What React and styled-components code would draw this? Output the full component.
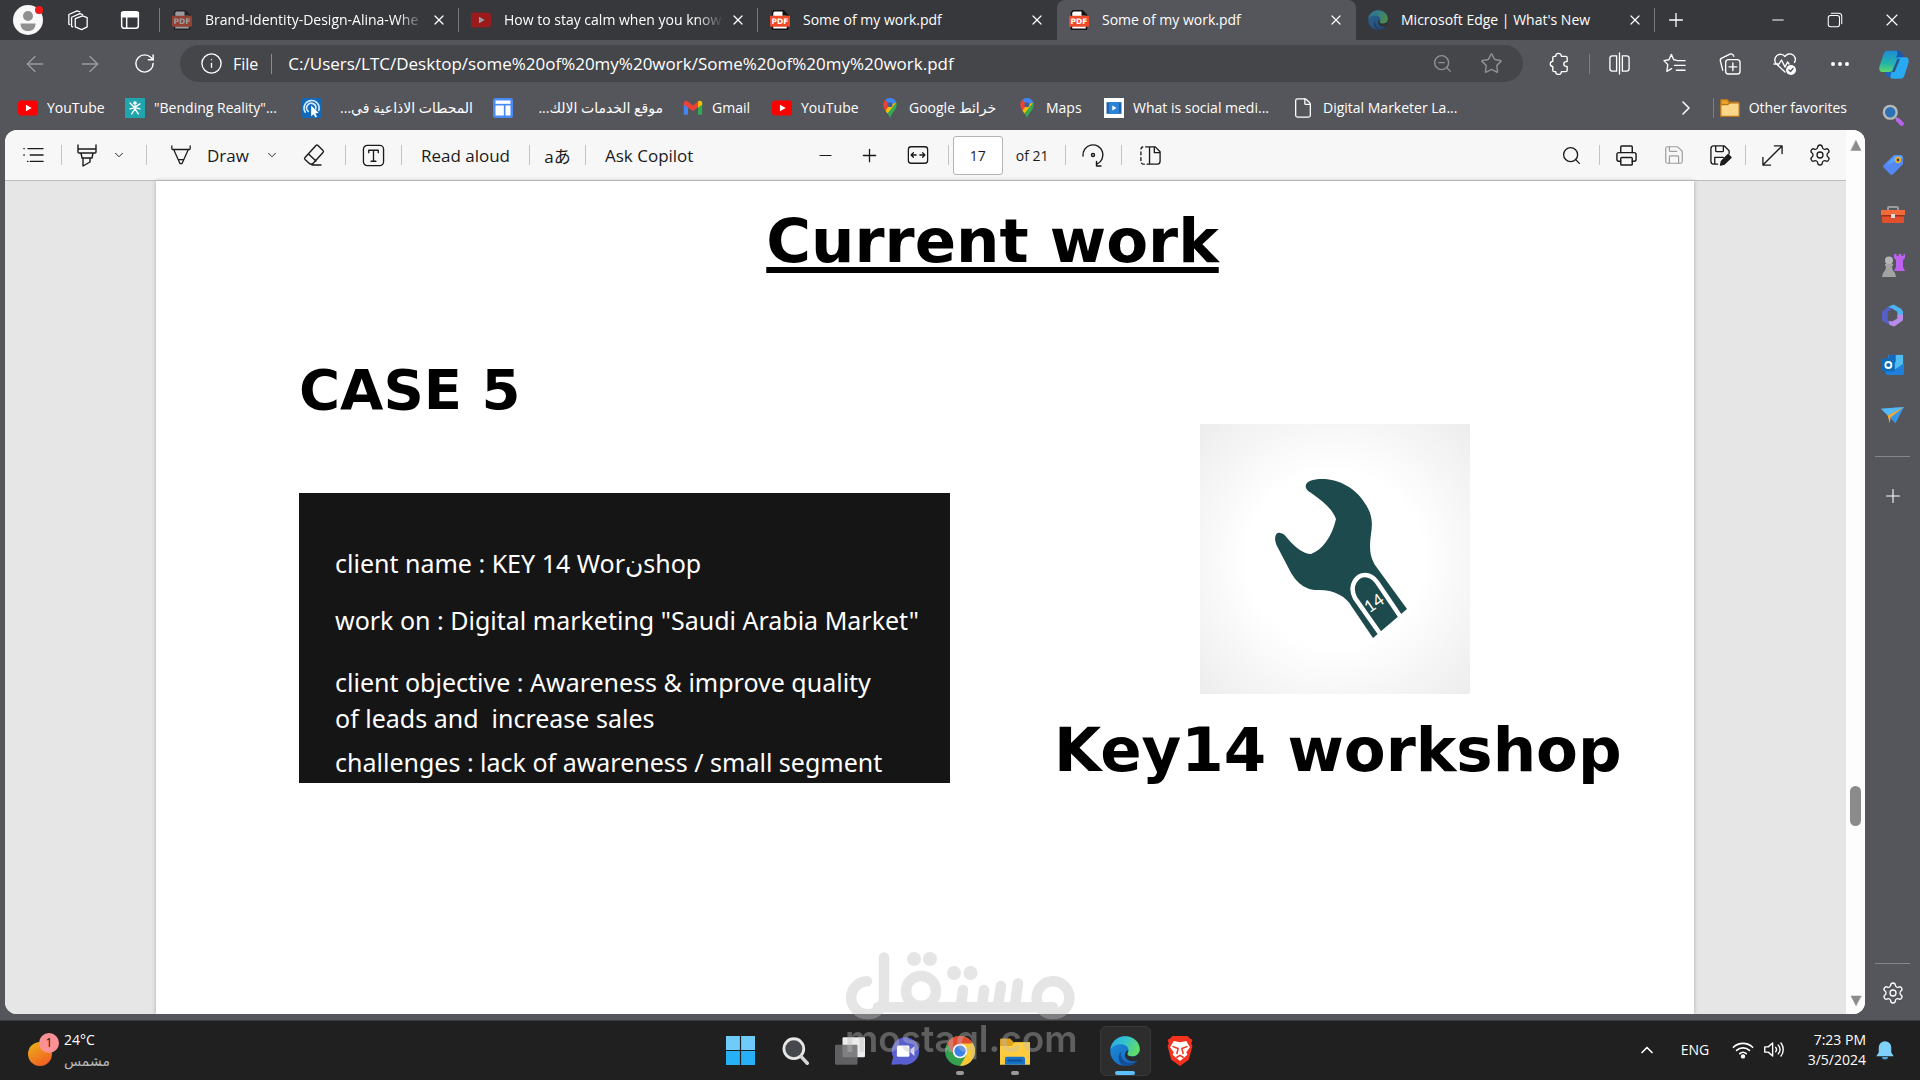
import React from "react";
import styled, { createGlobalStyle, css } from "styled-components";
import {
  ArrowLeft, ArrowRight, ChevronDown, ChevronRight, ChevronUp, Ellipsis, File, Info,
  Minus, Plus, Printer, RotateCw, Save, Search, Settings, Star, X, ZoomOut,
} from "lucide-react";

const ui = `"Open Sans", "Noto Sans", "DejaVu Sans", "Noto Sans CJK JP", sans-serif`;

const GlobalStyle = createGlobalStyle`
  * { box-sizing: border-box; }
  html, body, #root { margin: 0; height: 100%; }
  body { background: #55565b; font-family: ${ui}; font-size: 14px; color: #fff; overflow: hidden; }
  button, input { font: inherit; color: inherit; }
  a { color: inherit; text-decoration: none; }
  h1, h2, p, figure { margin: 0; }
  svg { display: block; flex: none; }
`;

const Screen = styled.div`
  display: flex;
  flex-direction: column;
  min-height: 100vh;
`;

const Btn = styled.button`
  display: flex;
  align-items: center;
  justify-content: center;
  flex: none;
  gap: ${(p) => p.$gap || 15}px;
  width: ${(p) => (p.$w ? `${p.$w}px` : "auto")};
  height: ${(p) => p.$h || 36}px;
  padding: ${(p) => p.$pad || "0"};
  border: 0;
  background: none;
  white-space: nowrap;
  opacity: ${(p) => (p.$dim ? 0.4 : 1)};
`;

/* ---------- tab strip ---------- */
const TabStrip = styled.header`
  display: flex;
  height: 40px;
  flex: none;
  background: #37383c;
`;
const tabLine = css`
  &::before { content: ""; position: absolute; left: -1px; top: 8px; height: 24px; width: 1px; background: #77787c; }
`;
const Tab = styled.div`
  display: flex;
  align-items: center;
  flex: 0 1 299px;
  min-width: 0;
  padding: 0 10px 0 12px;
  gap: 13px;
  position: relative;
  ${(p) => p.$active && css`background: #55565b; border-radius: 8px 8px 0 0;`}
  ${(p) => p.$line && tabLine}
`;
const NewTab = styled.button`
  display: flex;
  align-items: center;
  justify-content: center;
  flex: none;
  position: relative;
  width: 42px;
  padding: 0;
  border: 0;
  background: none;
  ${tabLine}
`;
const TabIcon = styled.span`
  opacity: ${(p) => (p.$faded ? 0.5 : 1)};
`;
const TabTitle = styled.span`
  flex: 1;
  overflow: hidden;
  white-space: nowrap;
  line-height: 20px;
  margin-right: -8px;
  ${(p) => p.$fade && css`mask-image: linear-gradient(90deg, #000 88%, transparent);`}
`;
const Grow = styled.div`
  flex: ${(p) => p.$n || 1};
`;

/* ---------- address row ---------- */
const NavRow = styled.nav`
  display: flex;
  align-items: center;
  flex: none;
  height: 47px;
  padding-left: 7px;
`;
const Address = styled.div`
  display: flex;
  align-items: center;
  flex: 1;
  height: 37px;
  margin: 0 9px 0 8px;
  padding: 0 8px 0 20px;
  border-radius: 19px;
  background: #45464a;
  font-size: 16px;
`;
const FileTag = styled.span`
  padding: 0 13px 0 10px;
  margin-right: 16px;
  border-right: 1px solid #8a8b8e;
  line-height: 20px;
`;
const UrlInput = styled.input`
  flex: 1;
  min-width: 0;
  padding: 0;
  border: 0;
  outline: 0;
  background: none;
  font-size: 17px;
`;
const Rule = styled.span`
  flex: none;
  width: 1px;
  height: 20px;
  margin: 0 ${(p) => p.$m || 0}px;
  background: ${(p) => (p.$light ? "#c4c4c4" : "#7e7f83")};
`;

/* ---------- bookmarks + body ---------- */
const Body = styled.div`
  display: flex;
  flex: 1;
  min-height: 0;
`;
const Main = styled.div`
  display: flex;
  flex-direction: column;
  flex: 1;
  min-width: 0;
  padding: 0 0 6px 5px;
`;
const Bookmarks = styled.nav`
  display: flex;
  align-items: center;
  flex: none;
  height: 43px;
  padding: 0 18px 1px 13px;
`;
const Bookmark = styled.a`
  display: flex;
  align-items: center;
  gap: 9px;
  margin-right: 20px;
  white-space: nowrap;
  line-height: 20px;
  &:last-child { margin-right: 0; }
`;
const BookmarkLabel = styled.span`
  width: ${(p) => (p.$w ? `${p.$w}px` : "auto")};
`;

const Side = styled.aside`
  display: flex;
  flex-direction: column;
  align-items: center;
  width: 55px;
  flex: none;
  padding-top: 3px;
`;
const SideRule = styled.span`
  width: 35px;
  height: 1px;
  margin: ${(p) => p.$m};
  background: #85868a;
`;

/* ---------- viewer ---------- */
const Viewer = styled.main`
  display: flex;
  flex: 1;
  min-height: 0;
  border-radius: 12px;
  overflow: hidden;
  background: #fff;
  color: #1b1b1b;
`;
const Doc = styled.div`
  display: flex;
  flex-direction: column;
  flex: 1;
  min-width: 0;
`;
const PdfBar = styled.div`
  display: flex;
  align-items: center;
  flex: none;
  height: 51px;
  padding-right: 5px;
  background: #f7f7f7;
  border-bottom: 1px solid #bdbdbd;
  font-size: 17px;
`;
const PageBox = styled.input`
  width: 50px;
  height: 39px;
  padding: 0;
  border: 1px solid #b4b4b4;
  border-radius: 3px;
  background: #fff;
  text-align: center;
  font-size: 14px;
`;
const PageCount = styled.label`
  width: 62px;
  padding-left: 13px;
  font-size: 14px;
`;
const Canvas = styled.div`
  display: flex;
  flex: 1;
  min-height: 0;
  padding: 0 152px 0 151px;
  background: #e6e6e6;
`;
const Sheet = styled.article`
  flex: 1;
  min-width: 0;
  padding-left: 143px;
  background: #fff;
  color: #000;
  box-shadow: 0 0 4px #aaa;
`;
const heading = css`
  font-family: "DejaVu Sans", Verdana, sans-serif;
  font-weight: 700;
  line-height: 72px;
  white-space: nowrap;
`;
const Title = styled.h1`
  ${heading}
  margin-top: 24px;
  padding-right: 8px;
  font-size: 61px;
  text-align: center;
  text-decoration: underline;
  text-decoration-thickness: 6px;
  text-underline-offset: 5px;
  text-decoration-skip-ink: none;
`;
const Columns = styled.div`
  display: grid;
  grid-template-columns: 651px 1fr;
  column-gap: 104px;
  margin-top: 77px;
`;
const CaseTitle = styled.h2`
  ${heading}
  font-size: 56px;
`;
const Brief = styled.section`
  height: 290px;
  margin-top: 67px;
  padding: 52px 0 0 36px;
  background: #151515;
  color: #fff;
  font-family: "Noto Sans", "DejaVu Sans", sans-serif;
  font-size: 25px;
  line-height: 36px;
  white-space: pre;
`;
const Line = styled.p`
  margin-bottom: ${(p) => p.$mb || 0}px;
`;
const Figure = styled.figure`
  margin: 70px 0 20px 146px;
  width: 270px;
  height: 270px;
`;
const Brand = styled.h2`
  ${heading}
  font-size: 61px;
`;
const ScrollBar = styled.div`
  display: flex;
  flex-direction: column;
  align-items: center;
  width: 19px;
  padding: 10px 0 8px;
  background: #fdfdfd;
`;
const Thumb = styled.span`
  width: 11px;
  height: 40px;
  border-radius: 6px;
  background: #8b8b8b;
`;

/* ---------- taskbar ---------- */
const Taskbar = styled.footer`
  display: grid;
  grid-template-columns: 1fr auto 1fr;
  align-items: center;
  height: 60px;
  flex: none;
  background: #202020;
  border-top: 1px solid #3a3a3a;
`;
const Weather = styled.div`
  display: flex;
  align-items: center;
  gap: 4px;
  padding: 0 0 2px 26px;
  line-height: 21px;
`;
const Muted = styled.div`
  color: #b9b9b9;
`;
const Apps = styled.div`
  display: flex;
`;
const AppButton = styled.button`
  display: flex;
  align-items: center;
  justify-content: center;
  position: relative;
  width: 51px;
  height: 50px;
  margin: 0 2px;
  padding: 0;
  border: 1px solid ${(p) => (p.$active ? "#393939" : "transparent")};
  border-radius: 6px;
  background: ${(p) => (p.$active ? "#2d2d2d" : "none")};
  &::after {
    content: "";
    position: absolute;
    bottom: 0;
    width: ${(p) => (p.$active ? 20 : p.$open ? 8 : 0)}px;
    height: 4px;
    border-radius: 2px;
    background: ${(p) => (p.$active ? "#5cc0fa" : "#9a9a9a")};
  }
`;
const AppGap = styled.span`
  width: 55px;
`;
const Tray = styled.div`
  display: flex;
  align-items: center;
  justify-content: flex-end;
  padding: 0 25px 2px 0;
`;
const Clock = styled.time`
  width: 76px;
  margin-right: 9px;
  text-align: right;
  line-height: 20px;
`;

const Watermark = styled.div`
  position: fixed;
  left: 50%;
  bottom: 22px;
  width: 230px;
  margin-left: -115px;
  opacity: 0.4;
  color: #bebebe;
  pointer-events: none;
  text-align: center;
  font: 600 37px/38px Inter, sans-serif;
  white-space: nowrap;
`;

/* ---------- drawings ---------- */
const G = ({ s = 20, w = 1.4, children, box = 24, ...rest }) => (
  <svg width={s} height={s} viewBox={`0 0 ${box} ${box}`} fill="none" stroke="currentColor"
    strokeWidth={w} strokeLinecap="round" strokeLinejoin="round" aria-hidden="true" {...rest}>{children}</svg>
);
const Pdf = () => (
  <G s={20} w={0}>
    <path d="M5 1h11l5 5v17H3V3z" fill="#fff" stroke="#111" strokeWidth="1.800" />
    <path d="M15 0l7 7h-7z" fill="#111" />
    <rect x="0" y="7" width="24" height="13" rx="1" fill="#ee4b2b" />
    <text x="12" y="17" fill="#fff" fontSize="9" fontWeight="700" textAnchor="middle" fontFamily="DejaVu Sans">PDF</text>
  </G>
);
const Tube = () => (
  <G w={0}><rect x="0" y="3" width="24" height="18" rx="4" fill="#f00" /><path d="M9.500 8l7 4-7 4z" fill="#fff" /></G>
);
const EdgeLogo = ({ s = 20 }) => (
  <G s={s} w={0}>
    <defs>
      <linearGradient id="eg1" x1="0" y1="0" x2="1" y2=".4"><stop stopColor="#2aa5e8" /><stop offset=".5" stopColor="#33c2d0" /><stop offset="1" stopColor="#5fdc6a" /></linearGradient>
      <linearGradient id="eg2" x1="0" y1="0" x2="1" y2="1"><stop stopColor="#1b8fe0" /><stop offset="1" stopColor="#1660b4" /></linearGradient>
    </defs>
    <circle cx="12" cy="12" r="11.800" fill="url(#eg2)" />
    <path d="M.3 11C1 4.500 6 .2 12 .2c7 0 11.800 5 11.800 10.200 0 3.600-2.600 6-6 6-2.400 0-4-1-4-2 0-.7 1-1.200 1-3 0-2.700-2.600-4.800-6-4.800C4.500 6.600 1.200 8.800.3 11z" fill="url(#eg1)" />
    <path d="M9 12c-1.500 4.500 2 9.500 7.500 9.500 2.500 0 4.500-1 6-2.500-2 4-6.500 5.400-10.500 4.800C7.500 23 5 17 9 12z" fill="#154d96" />
    <path d="M13.800 14.400c0 1 1.600 2 4 2 3 0 5.100-1.500 5.800-4 .2 3-.2 5-1.600 7-3 1.600-9 1-10-3.400-.3-2 .8-4 2.400-4.600.6 1.600-.6 2.300-.6 3z" fill="#2c2c2f" />
  </G>
);
const MapPin = () => (
  <G w={0}>
    <path d="M12 0a8 8 0 0 1 7.500 5.500L12 8 6 2.500A8 8 0 0 1 12 0z" fill="#4285f4" />
    <path d="M6 2.500L12 8l-5.500 7C4.500 12 4 10 4 8c0-2.200.8-4.200 2-5.500z" fill="#ea4335" />
    <path d="M12 8l-5.500 7 2.500 3.500L18.500 11l1-5.500z" fill="#fbbc04" />
    <path d="M19.500 5.500c1.300 3.500 0 7-2 9.500-2.500 3-4 5-5.500 9-.8-2.300-1.800-4-3-5.500z" fill="#34a853" />
    <circle cx="12" cy="8" r="3" fill="#3c5f96" />
  </G>
);
const Gmail = () => (
  <G w={0}>
    <path d="M1 6v14h5V10z" fill="#4285f4" /><path d="M23 6v14h-5V10z" fill="#34a853" />
    <path d="M1 6c0-2.500 2.500-3.500 4.500-2L12 9l6-4.800V11l-6 4.500L1 8z" fill="#ea4335" />
    <path d="M18 4.200c2-1.700 5-.7 5 1.800v2l-5 3.500z" fill="#fbbc04" />
  </G>
);
const Spark = () => (
  <G w={1.6} stroke="#fff"><rect width="24" height="24" fill="#20a4ae" stroke="none" />
    <path d="M12 9v4M12 12L6 6M12 11l6-4M12 13l-4 6M12 13l4 6M6 13l6-1.500 6 1.500" /><circle cx="12" cy="6" r="1.400" fill="#fff" /></G>
);
const Radio = () => (
  <G w={2} stroke="#cfe9ff"><rect width="24" height="24" rx="3" fill="#1269b8" stroke="none" />
    <path d="M4 17a9 9 0 1 1 16-2M7.500 16a5.500 5.500 0 1 1 9-3" /><path d="M11 9l9 9-4 .4 2 4-2 1-2-4-3 2.600z" fill="#fff" stroke="none" /></G>
);
const Layout = () => (
  <G w={0}><rect width="24" height="24" rx="3" fill="#4a8af4" /><rect x="3" y="3" width="18" height="4" fill="#fff" />
    <rect x="3" y="9" width="10" height="12" fill="#fff" /><rect x="15" y="9" width="6" height="12" fill="#fff" /></G>
);
const Clip = () => (
  <G w={0}><rect width="24" height="24" fill="#fff" /><rect x="3" y="5" width="18" height="14" fill="#1c63b0" />
    <rect x="6" y="5" width="12" height="14" fill="#2f83d6" /><path d="M10 9l5 3-5 3z" fill="#fff" /></G>
);
const Folder = () => (
  <G w={1.4} stroke="#b8741a"><path d="M1 2h8l2 3h11v17H1z" fill="#e9a227" /><path d="M1 8h8l3-2h11v16H1z" fill="#fbd78a" /></G>
);
const Copilot = () => (
  <G s={32} w={0}>
    <defs><linearGradient id="cp" x1="0" y1="0" x2="0" y2="1"><stop stopColor="#1f8ad8" /><stop offset=".6" stopColor="#23b4a8" /><stop offset="1" stopColor="#5fd86a" /></linearGradient></defs>
    <path d="M11 2h4c2 0 3 1 3.500 3L20 8.500h-7z" fill="#1b57b0" />
    <path d="M7 2h6c1.500 0 2 1 1.600 2.400L11.500 15c-.6 2-1.500 3-3.500 3H3.500C1 18 .6 16 1.200 13.500L4 5c.6-2 1.500-3 3-3z" fill="url(#cp)" />
    <path d="M13 22H9c-2 0-3-1-3.500-3L5 18h6z" fill="#1c63bd" />
    <path d="M17 22h-6c-1.500 0-2-1-1.600-2.400L12.500 9c.6-2 1.500-3 3.500-3h4.500c2.500 0 2.900 2 2.300 4.500L20 19c-.6 2-1.500 3-3 3z" fill="#28a9f2" transform="translate(0 1)" />
    <path d="M14.500 8h2l-4 10h-2z" fill="#2f3a4c" opacity=".75" />
  </G>
);
const Wrench = () => (
  <svg width="270" height="270" viewBox="0 0 270 270" role="img" aria-label="Key14 wrench logo">
    <defs><radialGradient id="vg" r=".72"><stop offset=".45" stopColor="#fff" /><stop offset="1" stopColor="#ececec" /></radialGradient></defs>
    <rect width="270" height="270" fill="url(#vg)" />
    <path fill="#1d4a4c" d="M106 64C104 58 112 55 122 55C140 55 156 65 164 78C172 89 173 98 171 110C169 125 170 132 175 141L207 185L173 214L152 183C146 172 134 166 119 166C103 167 94 155 89 145L77 122C73 113 76 108 80 109C83 109 85 111 88 115C95 123 103 130 111 130C122 126 132 113 136 95C132 84 122 77 114 71C110 68 107 67 106 64Z" />
    <path fill="none" stroke="#fff" strokeWidth="4.500" d="M181 211L155 174C148 160 158 151 165 151C171 151 174 154 177 158L202 195" />
    <text x="174" y="185" fill="#fff" fontSize="17" textAnchor="middle" transform="rotate(-35 174 179)" fontFamily="Lato">14</text>
  </svg>
);

const Shop = () => (<G s={22} w={0}><path d="M2 12L13 1h8l2 2v8L12 22c-1 1-2 1-3 0l-7-7c-1-1-1-2 0-3z" fill="#5488f7" /><path d="M14 2h7l2 2-18 8z" fill="#5fb0f2" opacity=".7" /><circle cx="17.500" cy="6.500" r="2.500" fill="#40444c" stroke="#f0b429" strokeWidth="1.800" /></G>);
const Lens = () => (<G s={22} w={0}><circle cx="9" cy="9" r="7" fill="#2a72b5" stroke="#b8b8b8" strokeWidth="2.600" /><path d="M15 15l2 2" stroke="#999" strokeWidth="2" /><path d="M17.500 17.500l4 4" stroke="#b964ee" strokeWidth="4.500" /></G>);
const Toolbox = () => (<G s={24} w={0}><path d="M7 7V5q0-1 1-1h8q1 0 1 1v2" stroke="#9c9c9c" strokeWidth="2" fill="none" /><rect x="1" y="7" width="22" height="13" rx="1.500" fill="#e0502c" /><path d="M0 7h24v5H0z" fill="#f26a3a" /><path d="M1 12h22v1.500H1z" fill="#9b2f18" /><rect x="10" y="11" width="4" height="4" fill="#ddd" /></G>);
const Chess = () => (<G s={24} w={0}><path d="M13 1h2.500v2h2V1h3v2h2V1H24v4l-2 2v7l2 4H13l2-4V7l-2-2z" fill="#bb62ee" /><circle cx="8" cy="7.500" r="4" fill="#b5b5b5" /><path d="M4 11h8v2h-1c0 3 1 5 3 7l1 4H1l1-4c2-2 3-4 3-7H4z" fill="#a3a3a3" /></G>);
const M365 = () => (<G s={23} w={0}><path d="M7 3l6-2.500L21 5l2 3v6l-6-3V8l-5-3z" fill="#4ab4f0" /><path d="M23 11v6l-9 6.500-5-1.500-2-4 5 0 5-3v-4z" fill="#b98be8" /><path d="M7 3l5 2-5 3v7l2 7-7-4-1-3V8z" fill="#5560c8" /></G>);
const Outlook = () => (<G s={22} w={0}><rect x="7" y="1" width="16" height="16" fill="#50bdf0" /><path d="M7 1h8v8H7z" fill="#1468bd" /><path d="M4 14l10 3 10-7v11q0 2-2 2H6q-2 0-2-2z" fill="#1f80dc" /><rect y="5" width="14" height="14" rx="1" fill="#0f6cbd" /><circle cx="7" cy="12" r="3.300" fill="none" stroke="#fff" strokeWidth="2" /></G>);
const Plane = () => (<G s={23} w={0}><path d="M0 5l24-2-9 17-5-5z" fill="#3597ea" /><path d="M0 5l24-2L7 12z" fill="#55b8f7" /><path d="M7 12l17-9L10 14l-1 6z" fill="#f3a932" /></G>);

const Chrome = () => (<G s={30} w={0}><circle cx="12" cy="12" r="12" fill="#34a050" /><path d="M1.600 6A12 12 0 0 1 22.400 6L12 7 7 15z" fill="#e34b31" /><path d="M22.400 6A12 12 0 0 1 12 24l5.200-9L12 6z" fill="#fcc934" /><circle cx="12" cy="12" r="5.800" fill="#fff" /><circle cx="12" cy="12" r="4.500" fill="#3b82e8" /></G>);
const Explorer = () => (<G s={30} w={0}><path d="M0 3q0-1 1-1h7l3 3H24v5H0z" fill="#e0a11c" /><path d="M0 8h9l3-3h12v18H0z" fill="#fccb3f" /><path d="M4 23v-5q0-1.500 1.500-1.500h13q1.500 0 1.500 1.500v5z" fill="#1873c8" /><path d="M7 19.500h10" stroke="#0f569c" strokeWidth="2" /></G>);
const Brave = () => (<G s={30} w={0}><path d="M6 0h12l2 2 2 1-1 3 1 2-3 11-7 5-7-5L2 8l1-2-1-3 2-1z" fill="#f4321d" /><path d="M7 4l5 1 5-1 3 5-3 4 1 2-6 5-6-5 1-2-3-4z" fill="#fff" /><path d="M6.500 8.500l4 1.500-1 4M17.500 8.500l-4 1.500 1 4M9.500 17l2.500-1.500 2.500 1.500" stroke="#f4321d" strokeWidth="1.200" fill="none" /></G>);
const Chat = () => (<G s={30} w={0}><path d="M12 1a11 11 0 1 1-3 21.500L1 23l1.500-6A11 11 0 0 1 12 1z" fill="#5a5fd0" /><rect x="5.500" y="7.500" width="10" height="9" rx="1" fill="#fff" /><path d="M16.500 11l3-3v8l-3-3z" fill="#dfe0ff" /></G>);
const Start = () => (<G s={29} w={0}><path d="M0 0h11.500v11.500H0zM12.500 0H24v11.500H12.500z" fill="#6fcbfa" /><path d="M0 12.500h11.500V24H0zM12.500 12.500H24V24H12.500z" fill="#28b0f6" /></G>);
const Finder = () => (<G s={28} w={0}><circle cx="11" cy="10" r="8.500" fill="#45484c" stroke="#e8e8e8" strokeWidth="2.400" /><path d="M17.500 17l5 5.500" stroke="#d5d5d5" strokeWidth="3" /></G>);
const Desks = () => (<G s={30} w={0}><rect x="6" y="1" width="18" height="16" rx="1" fill="#ececec" /><rect x="0" y="7" width="18" height="16" rx="1" fill="#6c6c6e" opacity=".85" /></G>);
const Sun = () => (
  <svg width="34" height="36" viewBox="0 0 34 36" aria-hidden="true">
    <defs><linearGradient id="sn" x1="0" y1="0" x2=".6" y2="1"><stop stopColor="#eab417" /><stop offset="1" stopColor="#f26222" /></linearGradient></defs>
    <circle cx="14" cy="22" r="12" fill="url(#sn)" /><circle cx="23" cy="11" r="10" fill="#fb9095" />
    <text x="23" y="15" fontSize="12" textAnchor="middle" fill="#111">1</text>
  </svg>
);
const MostaqlMark = () => (
  <svg width="230" height="70" viewBox="0 0 230 70" fill="none" stroke="currentColor" strokeWidth="10.500" strokeLinecap="round" role="img" aria-label="مستقل">
    <path d="M22 31.300A16.400 16.400 0 1 0 39 48V7.500" />
    <line x1="33" y1="57.300" x2="208" y2="57.300" />
    <circle cx="76" cy="41" r="15" /><circle cx="208" cy="47.700" r="16.400" />
    <line x1="118" y1="40" x2="116" y2="55" /><line x1="139" y1="40" x2="137" y2="55" />
    <line x1="156" y1="36" x2="153" y2="55" /><line x1="173" y1="33.500" x2="170" y2="55" />
    <g fill="currentColor" stroke="none"><circle cx="69" cy="9" r="7" /><circle cx="85" cy="9" r="7" /><circle cx="109" cy="23" r="7" /><circle cx="125.500" cy="23" r="7" /></g>
  </svg>
);

const tabs = [
  { icon: <Pdf />, title: "Brand-Identity-Design-Alina-Whe", faded: true, fade: true, line: true },
  { icon: <Tube />, title: "How to stay calm when you know", faded: true, fade: true, line: true },
  { icon: <Pdf />, title: "Some of my work.pdf", line: true },
  { icon: <Pdf />, title: "Some of my work.pdf", active: true },
  { icon: <EdgeLogo />, title: "Microsoft Edge | What's New", faded: true },
];

const bookmarks = [
  { icon: <Tube />, label: "YouTube", w: 58 },
  { icon: <Spark />, label: '"Bending Reality"...', w: 128 },
  { icon: <Radio />, label: "المحطات الاذاعية في...", rtl: true, w: 142 },
  { icon: <Layout />, label: "موقع الخدمات الالك...", rtl: true, w: 141 },
  { icon: <Gmail />, label: "Gmail", w: 40 },
  { icon: <Tube />, label: "YouTube", w: 59 },
  { icon: <MapPin />, label: "Google خرائط", w: 88 },
  { icon: <MapPin />, label: "Maps", w: 38 },
  { icon: <Clip />, label: "What is social medi...", w: 139 },
  { icon: <File size={22} strokeWidth={1.4} />, label: "Digital Marketer La...", w: 139 },
];

export default function App() {
  return (
    <Screen>
      <GlobalStyle />
      <TabStrip>
        <Btn $w={56} $h={40} aria-label="Profile">
          <svg width="30" height="30" viewBox="0 0 30 30"><circle cx="15" cy="15" r="15" fill="#f8f8f8" /><circle cx="15" cy="11" r="5" fill="#8f8f8f" /><path d="M7.500 18.500h15c0 5-3 7.500-7.500 7.500s-7.500-2.500-7.500-7.500z" fill="#8f8f8f" /><circle cx="26" cy="5" r="4" fill="#f01818" /></svg>
        </Btn>
        <Btn $w={44} $h={40} aria-label="Workspaces"><G s={22}><path d="M9 10.500l8-3 5 2v10l-6 3-7-3z" /><path d="M6 19.500l-1-.5V9l9-4 3 1M3 17l-1-.5V6l9-4 3 1" /></G></Btn>
        <Btn $w={60} $h={40} aria-label="Tab actions"><G s={20} w={1.8}><rect x="2" y="2" width="20" height="20" rx="3" /><path d="M2 3h20v5H2z" fill="#fff" /><path d="M8 8v14" /></G></Btn>
        {tabs.map((t, i) => (
          <Tab key={i} $active={t.active} $line={t.line}>
            <TabIcon $faded={t.faded}>{t.icon}</TabIcon>
            <TabTitle $fade={t.fade}>{t.title}</TabTitle>
            <Btn $w={20} $h={20} aria-label="Close tab"><X size={16} strokeWidth={1.8} /></Btn>
          </Tab>
        ))}
        <NewTab aria-label="New tab"><Plus size={22} strokeWidth={1.4} /></NewTab>
        <Grow />
        <Btn $w={57} $h={40} aria-label="Minimize"><Minus size={18} strokeWidth={1.4} /></Btn>
        <Btn $w={57} $h={40} aria-label="Restore"><G s={18}><rect x="3" y="6" width="15" height="15" rx="3" /><path d="M7 3h10a4 4 0 0 1 4 4v10" /></G></Btn>
        <Btn $w={57} $h={40} aria-label="Close window"><X size={20} strokeWidth={1.4} /></Btn>
      </TabStrip>

      <NavRow>
        <Btn $w={55} $dim aria-label="Back"><ArrowLeft size={26} strokeWidth={1.3} /></Btn>
        <Btn $w={55} $dim aria-label="Forward"><ArrowRight size={26} strokeWidth={1.3} /></Btn>
        <Btn $w={55} aria-label="Refresh"><RotateCw size={23} strokeWidth={1.5} /></Btn>
        <Address>
          <Info size={23} strokeWidth={1.4} />
          <FileTag>File</FileTag>
          <UrlInput aria-label="Address" defaultValue="C:/Users/LTC/Desktop/some%20of%20my%20work/Some%20of%20my%20work.pdf" />
          <Btn $w={50} $dim aria-label="Zoom out"><ZoomOut size={21} strokeWidth={1.6} /></Btn>
          <Btn $w={48} $dim aria-label="Add to favorites"><Star size={23} strokeWidth={1.5} /></Btn>
        </Address>
        <Btn $w={55} aria-label="Extensions"><G s={23}><path d="M8 4.500a3 3 0 0 1 6 0h4.500q1.500 0 1.500 1.500v4h-1a2.500 2.500 0 0 0 0 5h1v4q0 1.500-1.500 1.500H14a3 3 0 0 1-6 0H6.500Q5 20.500 5 19v-4a2.600 2.600 0 0 1 0-5.200V6q0-1.500 1.500-1.500z" /></G></Btn>
        <Rule $m={2} />
        <Btn $w={55} aria-label="Split screen"><G s={23}><path d="M9 4H4.500Q2 4 2 6.500v11Q2 20 4.500 20H9M15 4h4.500Q22 4 22 6.500v11q0 2.500-2.500 2.500H15M12 1v22M9 4v16M15 4v16" /></G></Btn>
        <Btn $w={55} aria-label="Favorites"><G s={23}><path d="M14 8.500l-2.800-.4L8.800 2.500 6.200 8.100 1 9l4 4.200-1 7 5-2.800M15 9h8M12 14h11M14 19h9" /></G></Btn>
        <Btn $w={55} aria-label="Collections"><G s={23}><rect x="8" y="8" width="15" height="15" rx="3" /><path d="M15.500 11.500v8M11.500 15.500h8M5 19l-2.500-9.500q-.6-2.500 2-3.300L13 2q2.500-.6 3.500 2.500" /></G></Btn>
        <Btn $w={55} aria-label="Browser essentials"><G s={24}><path d="M12 20L3 11.500a5.500 5.500 0 0 1 9-7 5.500 5.500 0 0 1 9.500 6M1 12h5l2.500-4 3.500 7 2.500-5 1.500 2" /><circle cx="18" cy="18" r="5" fill="#fff" stroke="none" /><path d="M16 18l1.500 1.500L20 16.500" stroke="#55565b" /></G></Btn>
        <Btn $w={55} aria-label="Settings and more"><Ellipsis size={24} strokeWidth={2} /></Btn>
        <Btn $w={53} aria-label="Copilot"><Copilot /></Btn>
      </NavRow>

      <Body>
        <Main>
          <Bookmarks>
            {bookmarks.map((b, i) => (
              <Bookmark href="#" key={i}>
                {b.icon}
                <BookmarkLabel $w={b.w} dir={b.rtl ? "rtl" : "ltr"}>{b.label}</BookmarkLabel>
              </Bookmark>
            ))}
            <Grow />
            <Btn $w={42} aria-label="More favorites"><ChevronRight size={24} strokeWidth={1.5} /></Btn>
            <Rule $m={6} />
            <Bookmark href="#"><Folder /><span>Other favorites</span></Bookmark>
          </Bookmarks>

          <Viewer>
            <Doc>
              <PdfBar>
                <Btn $w={56} aria-label="Contents"><G s={22}><path d="M6.500 5H23M9 12h14M9 19h14M2 5h.5M2 12h.5M6 19h.5" /></G></Btn>
                <Rule $light />
                <Btn $w={50} aria-label="Highlight"><G s={24} w={1.4}><path d="M3 2v7q0 1 1 1h16q1 0 1-1V2M6 10l1 5h10l1-5M8 15v8l7-4v-4M3 6h18" /></G></Btn>
                <Btn $w={14} aria-label="Highlight options"><ChevronDown size={14} strokeWidth={1.6} /></Btn>
                <Rule $light $m={20} />
                <Btn $pad="0 11px 0 3px"><G s={22}><path d="M2 2v3q0 1 1 1h18q1 0 1-1V2M4 6l7 15.500h2L20 6M10 17h4" /></G>Draw</Btn>
                <Btn $w={24} aria-label="Draw options"><ChevronDown size={14} strokeWidth={1.6} /></Btn>
                <Btn $w={61} aria-label="Erase"><G s={24}><path d="M3 14.500L14 2.500q1-1 2 0l5 5q1 1 0 2L10.500 21H8l-5-4.500q-1-1 0-2zM6.500 11l7.500 7M10 22h9" /></G></Btn>
                <Rule $light />
                <Btn $w={55} aria-label="Add text"><G s={23}><rect x="1.500" y="1.500" width="21" height="21" rx="4" /><path d="M7 9V6.500h10V9M12 6.500V18M9.500 18h5" /></G></Btn>
                <Rule $light />
                <Btn $pad="0 19px">Read aloud</Btn>
                <Rule $light />
                <Btn $w={55} aria-label="Translate">aあ</Btn>
                <Rule $light />
                <Btn $pad="0 19px">Ask Copilot</Btn>
                <Grow />
                <Btn $w={44} aria-label="Zoom out page"><Minus size={19} strokeWidth={1.5} /></Btn>
                <Btn $w={44} aria-label="Zoom in page"><Plus size={21} strokeWidth={1.5} /></Btn>
                <Btn $w={52} aria-label="Fit to width"><G s={22}><rect x="1.500" y="3" width="21" height="18" rx="3" /><path d="M10 12H5M7 9.500L4.500 12 7 14.500M14 12h5M17 9.500l2.500 2.500-2.500 2.500" /></G></Btn>
                <Rule $light $m={4} />
                <PageBox id="page" defaultValue="17" />
                <PageCount htmlFor="page">of 21</PageCount>
                <Rule $light />
                <Btn $w={55} aria-label="Rotate"><G s={24}><path d="M2 13a10 10 0 1 1 14 8M15.500 23v-4.500M15.500 23H20" /><circle cx="12" cy="12" r="1.500" /></G></Btn>
                <Rule $light />
                <Btn $w={57} aria-label="Page view"><G s={23}><path d="M10 3H5Q2 3 2 6v12q0 3 3 3h5" strokeDasharray="3 3" /><path d="M11 3h6l5 5v10q0 3-3 3h-8zM16 3v6h6" /></G></Btn>
                <Grow $n={4} />
                <Btn $w={55} aria-label="Find"><Search size={21} strokeWidth={1.5} /></Btn>
                <Rule $light />
                <Btn $w={52} aria-label="Print"><Printer size={23} strokeWidth={1.5} /></Btn>
                <Btn $w={43} $dim aria-label="Save"><Save size={22} strokeWidth={1.3} /></Btn>
                <Btn $w={50} aria-label="Save as"><G s={23}><path d="M9 21H5q-3 0-3-3V5q0-3 3-3h11l5 5v3M7 2v5q0 1 1 1h6q1 0 1-1V2M6 21v-7h9" /><path d="M12 22l1-4 7-7 3 3-7 7z" fill="currentColor" /></G></Btn>
                <Rule $light />
                <Btn $w={52} aria-label="Full screen"><G s={23}><path d="M2 22L22 2M14 2h8v8M10 22H2v-8" /></G></Btn>
                <Btn $w={43} aria-label="PDF settings"><Settings size={24} strokeWidth={1.3} /></Btn>
              </PdfBar>
              <Canvas>
                <Sheet>
                  <Title>Current work</Title>
                  <Columns>
                    <div>
                      <CaseTitle>CASE 5</CaseTitle>
                      <Brief>
                        <Line $mb={21}>client name : KEY 14 Worنshop</Line>
                        <Line $mb={26}>work on : Digital marketing "Saudi Arabia Market"</Line>
                        <Line>client objective : Awareness & improve quality</Line>
                        <Line $mb={8}>of leads and  increase sales</Line>
                        <Line>challenges : lack of awareness / small segment</Line>
                      </Brief>
                    </div>
                    <div>
                      <Figure><Wrench /></Figure>
                      <Brand>Key14 workshop</Brand>
                    </div>
                  </Columns>
                </Sheet>
              </Canvas>
            </Doc>
            <ScrollBar>
              <G s={12} w={1}><path d="M12 1l10 20H2z" fill="#8b8b8b" stroke="#8b8b8b" /></G>
              <Grow $n={79} />
              <Thumb />
              <Grow $n={21} />
              <G s={12} w={1}><path d="M12 23L2 4h20z" fill="#8b8b8b" stroke="#8b8b8b" /></G>
            </ScrollBar>
          </Viewer>
        </Main>

        <Side>
          <Btn $h={50} aria-label="Search"><Lens /></Btn>
          <Btn $h={50} aria-label="Shopping"><Shop /></Btn>
          <Btn $h={50} aria-label="Tools"><Toolbox /></Btn>
          <Btn $h={50} aria-label="Games"><Chess /></Btn>
          <Btn $h={50} aria-label="Microsoft 365"><M365 /></Btn>
          <Btn $h={50} aria-label="Outlook"><Outlook /></Btn>
          <Btn $h={50} aria-label="Drop"><Plane /></Btn>
          <SideRule $m="16px 0 14px" />
          <Btn $h={50} aria-label="Customize"><Plus size={22} strokeWidth={1.2} /></Btn>
          <Grow />
          <SideRule $m="0 0 2px" />
          <Btn $h={54} aria-label="Sidebar settings"><Settings size={24} strokeWidth={1.3} /></Btn>
        </Side>
      </Body>

      <Taskbar>
        <Weather>
          <Sun />
          <div>
            <div>24°C</div>
            <Muted dir="rtl">مشمس</Muted>
          </div>
        </Weather>
        <Apps>
          <AppButton aria-label="Start"><Start /></AppButton>
          <AppButton aria-label="Search"><Finder /></AppButton>
          <AppButton aria-label="Task view"><Desks /></AppButton>
          <AppButton aria-label="Chat"><Chat /></AppButton>
          <AppButton $open aria-label="Chrome"><Chrome /></AppButton>
          <AppButton $open aria-label="File Explorer"><Explorer /></AppButton>
          <AppGap />
          <AppButton $active aria-label="Microsoft Edge"><EdgeLogo s={30} /></AppButton>
          <AppButton aria-label="Brave"><Brave /></AppButton>
        </Apps>
        <Tray>
          <Btn $w={34} aria-label="Hidden icons"><ChevronUp size={20} strokeWidth={2} /></Btn>
          <Btn $w={62}>ENG</Btn>
          <Btn $pad="0 6px" $gap={9} aria-label="Network and volume">
            <G s={22} w={1.8}><path d="M1.500 9a15 15 0 0 1 21 0M5 12.500a10 10 0 0 1 14 0M8.500 16a5 5 0 0 1 7 0" /><circle cx="12" cy="19" r="1.500" fill="#fff" /></G>
            <G s={21} w={1.6}><path d="M2 9v6h4l5 4.500v-15L6 9zM14.500 9.500a4 4 0 0 1 0 5M17.500 7a8 8 0 0 1 0 10M20.500 4.500a12 12 0 0 1 0 15" /></G>
          </Btn>
          <Clock>7:23 PM<br />3/5/2024</Clock>
          <Btn aria-label="Notifications"><G s={20} w={0}><path d="M12 1.500a7.500 7.500 0 0 1 7.500 7.500v6l3 4.500h-21l3-4.500V9A7.500 7.500 0 0 1 12 1.500z" fill="#7fd0fb" /><path d="M8.500 20.500h7a3.500 3 0 0 1-7 0z" fill="#4aa3d8" /></G></Btn>
        </Tray>
      </Taskbar>

      <Watermark><MostaqlMark />mostaql.com</Watermark>
    </Screen>
  );
}
